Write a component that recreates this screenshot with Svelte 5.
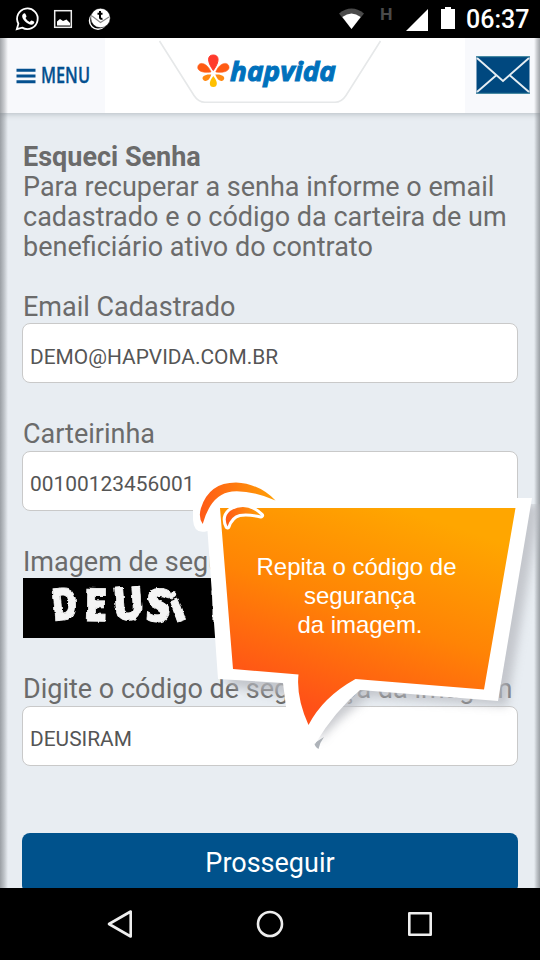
<script>
  const fields = [
    { id: 'email', label: 'Email Cadastrado', value: 'DEMO@HAPVIDA.COM.BR' },
    { id: 'card', label: 'Carteirinha', value: '00100123456001' }
  ];
  const glyphs = [
    { c: 'D', x: 30, y: 43, r: -5, s: 45, w: 26 },
    { c: 'E', x: 61, y: 43, r: 1, s: 46, w: 23 },
    { c: 'U', x: 91, y: 43, r: -4, s: 46, w: 31 },
    { c: 'S', x: 122, y: 43, r: 3, s: 46, w: 25 },
    { c: 'i', x: 152, y: 45, r: -20, s: 39, w: 14 },
    { c: 'R', x: 187, y: 43, r: 0, s: 42, w: 26 }
  ];
</script>

<div class="phone">
  <div class="status">
    <svg class="notif" width="120" height="38" viewBox="0 0 120 38">
      <path d="M16.800 29.200l1.600-5.500a10.300 10.300 0 1 1 3.800 3.900z" fill="none" stroke="#fff" stroke-width="1.800" />
      <path d="M23.500 13.800c.8-.7 1.600-.5 2 .3l.9 2c.3.6-.3 1.300-.9 1.900 1 2 2.500 3.200 4.300 3.900.7-.7 1.300-1.600 2-1.300l2.100 1c.9.5.2 2-.8 2.700-3.700 2.100-11.700-4.900-10.900-8.900.2-.8.7-1.200 1.300-1.600z" fill="#fff" />
      <rect x="54.700" y="10.700" width="16.600" height="16.600" fill="none" stroke="#eee" stroke-width="1.500" />
      <path d="M57 25.500v-4l3-2.500 3 2 3.500-1.500 3.500 3.500v2.500z" fill="#fff" />
      <circle cx="98" cy="20.800" r="8.500" fill="none" stroke="#fff" stroke-width="1.500" />
      <circle cx="100.500" cy="18" r="9.800" fill="#fff" stroke="#000" stroke-width=".6" />
      <path d="M92 16l8.500 6.500 8.500-5.500" fill="none" stroke="#888" stroke-width="1.100" />
      <path d="M100 11v6.500q0 1.700 2.500 1.200M97.500 13.700h5" fill="none" stroke="#000" stroke-width="2" />
    </svg>
    <div class="right">
      <svg width="124" height="38" viewBox="336 0 124 38">
        <path d="M339 13.500Q351.500 3.500 364 13.500L351.500 29z" fill="#4a4a4a" />
        <path d="M342.300 17Q351.500 10 360.700 17L351.500 29z" fill="#fff" />
        <text x="380" y="19.800" class="net" textLength="12.500" lengthAdjust="spacingAndGlyphs">H</text>
        <path d="M428 9v22h-22z" fill="#fff" />
        <path d="M441 9h4V7h6v2h4v20h-14z" fill="#fff" />
      </svg>
      <span class="clock">06:37</span>
    </div>
  </div>

  <div class="page">
    <header>
      <button class="menu" aria-label="MENU">
        <svg width="20" height="18" viewBox="0 0 20 18"><path d="M.5 3.200h19M.5 9h19M.5 14.800h19" stroke="#04508f" stroke-width="2.900" /></svg>
        <svg width="56" height="40" viewBox="0 0 56 40"><text x="0" y="27" class="menu-text" textLength="49" lengthAdjust="spacingAndGlyphs">MENU</text></svg>
      </button>
      <svg class="brand" width="360" height="75" viewBox="105 38 360 75">
        <path d="M159.500 41L194 95.500Q198.500 102.300 205 102.300H335Q341.500 102.300 346 95.500L380.500 41" fill="none" stroke="#e6e8e9" stroke-width="1.600" />
        <path d="M213.300 70.500C206.500 61 207.500 55 213.300 55S220.200 61 213.300 70.500z" fill="#ff3a2c" stroke="#ff3a2c" />
        <path d="M211 72C201.500 73.500 196 70 198.200 65.500S208 64 211 72z" fill="#ff5b14" stroke="#ff5b14" stroke-width=".6" />
        <path d="M215.800 72C225 73.500 230.800 70 228.600 65.500S218.500 64 215.800 72z" fill="#ff5b14" stroke="#ff5b14" stroke-width=".6" />
        <path d="M211.300 74.500C209.500 81 205 82.500 203 79.500S205.500 73.800 211.300 74.500z" fill="#ff8a12" />
        <path d="M215.300 74.500C217.500 81 222 82.500 223.800 79.500S221.500 73.800 215.300 74.500z" fill="#ff8a12" />
        <path d="M213.300 76C208.500 82 208.800 87 213.300 87S218.200 82 213.300 76z" fill="#ffc000" />
        <text x="230" y="80.500" class="logo" textLength="106" lengthAdjust="spacingAndGlyphs">hapvida</text>
      </svg>
      <button class="mail" aria-label="Email">
        <svg width="54" height="38" viewBox="0 0 54 38">
          <rect x=".5" y=".5" width="53" height="37" fill="#00487f" />
          <path d="M1 2L27 25 53 2M1 36L20 19.500M53 36L34 19.500" fill="none" stroke="#e5edf2" stroke-width="1.900" />
          <path d="M0 .7h54M0 37.300h54" stroke="#3b849c" />
        </svg>
      </button>
    </header>

    <main>
      <p class="intro"><b>Esqueci Senha</b><br />Para recuperar a senha informe o email<br />cadastrado e o código da carteira de um<br />beneficiário ativo do contrato</p>
      {#each fields as f}
        <div class="field">
          <label for={f.id}>{f.label}</label>
          <input class={f.id} id={f.id} value={f.value} />
        </div>
      {/each}
      <div class="field">
        <span class="label">Imagem de segurança</span>
        <svg class="captcha" width="246" height="60" viewBox="0 0 246 60">
          <defs>
            <filter id="worn" x="-5%" y="-10%" width="110%" height="120%">
              <feTurbulence type="fractalNoise" baseFrequency=".12" numOctaves="3" seed="8" result="n" />
              <feDisplacementMap in="SourceGraphic" in2="n" scale="4" xChannelSelector="R" yChannelSelector="G" />
              <feGaussianBlur stdDeviation=".35" />
            </filter>
          </defs>
          <rect width="246" height="60" fill="#000" />
          <g filter="url(#worn)">
            {#each glyphs as g}
              <text class="glyph" x={g.x} y={g.y} font-size={g.s} textLength={g.w} lengthAdjust="spacingAndGlyphs" transform={`rotate(${g.r} ${g.x} ${g.y})`}>{g.c}</text>
            {/each}
          </g>
        </svg>
      </div>
      <div class="field last">
        <label for="code">Digite o código de segurança da imagem</label>
        <input class="code" id="code" value="DEUSIRAM" />
      </div>
      <button class="submit">Prosseguir</button>
    </main>
    <div class="edge left"></div>
    <div class="edge rightedge"></div>
  </div>

  <nav>
    <svg width="540" height="72" viewBox="0 888 540 72" fill="none" stroke="#eee" stroke-width="2.600" stroke-linejoin="round">
      <path d="M130.700 911.500v25L109 924z" />
      <circle cx="270" cy="924" r="12" />
      <rect x="409.300" y="913.300" width="21.400" height="21.400" />
    </svg>
  </nav>

  <svg class="tip" width="360" height="310" viewBox="180 470 360 310">
    <defs>
      <linearGradient id="fire" gradientUnits="userSpaceOnUse" x1="400" y1="508" x2="330" y2="715">
        <stop offset="0" stop-color="#ffa600" />
        <stop offset=".5" stop-color="#ff8405" />
        <stop offset="1" stop-color="#ff5018" />
      </linearGradient>
      <linearGradient id="arc" x1="0" x2="1" y1="0" y2="0">
        <stop offset="0" stop-color="#ff5a17" />
        <stop offset="1" stop-color="#ffa005" />
      </linearGradient>
      <filter id="soft" x="-10%" y="-10%" width="125%" height="125%"><feGaussianBlur stdDeviation="5" /></filter>
      <clipPath id="shade"><path d="M180 504H540V780H316L316 748 218 679H180z" /></clipPath>
    </defs>
    <g clip-path="url(#shade)">
      <path d="M230 504H541L507 706L369 697Q340 717 319 741L310 700L228 686z" fill="#b8bac0" opacity=".75" filter="url(#soft)" />
    </g>
    <path d="M314.500 743Q314.500 746.500 318.500 749Q319.500 743 324 737z" fill="#9aa0a8" opacity=".8" />
    <path d="M193 512V498L230 480L280 498H532L498 701L360 690Q335 711 315 744L300 736L286 707L283 683L218 679L207.500 531Q194 535 193 520z" fill="#fff" />
    <path d="M220 508H515.500L484 689.500L355.500 679Q323 697 308.500 725Q296 697 298.500 674.500L233 669z" fill="url(#fire)" />
    <path d="M202.700 524Q198 517 201 508Q209 482.500 236 482.500Q259 483.500 275.500 500.500Q251 490 232 491.500Q211 494 202.700 524z" fill="url(#arc)" />
    <path d="M227.500 526.500Q223 517 230 511Q246 501 261 515.500Q248 512.500 239.500 514Q231 516 227.500 526.500z" fill="url(#arc)" stroke="#fff" stroke-width="6" stroke-linejoin="round" paint-order="stroke" />
    <g class="tip-text">
      <text x="256.500" y="575" textLength="200">Repita o código de</text>
      <text x="304" y="604" textLength="111.500">segurança</text>
      <text x="297.500" y="633" textLength="125">da imagem.</text>
    </g>
  </svg>
</div>

<style>
  :global(body) { margin: 0; background: #000; }
  .phone { position: relative; width: 540px; height: 960px; overflow: hidden; display: flex; flex-direction: column; font-family: Roboto, sans-serif; background: #000; }
  .status { height: 38px; flex: none; display: flex; justify-content: space-between; background: #000; }
  .right { display: flex; width: 204px; }
  .net { font: 700 17px Roboto, sans-serif; fill: #4a4a4a; }
  .clock { padding-left: 6px; font-size: 25px; font-weight: 500; line-height: 40px; color: #fff; white-space: nowrap; }
  .page { position: relative; height: 850px; flex: none; overflow: hidden; background: #e8edf2; }
  header { display: flex; height: 75px; background: #fff; box-shadow: 0 1px 6px #b5bcc2; }
  button { border: 0; padding: 0; font-family: inherit; }
  .menu { box-sizing: border-box; display: flex; align-items: center; gap: 5px; width: 105px; padding-left: 16px; background: #f8f9fc; }
  .menu svg { flex: none; }
  .menu-text { font: 600 21px "Open Sans", sans-serif; fill: #04508f; stroke: #04508f; stroke-width: .3; }
  .mail { box-sizing: border-box; width: 75px; padding: 0 0 1px 1px; display: flex; align-items: center; justify-content: center; background: #f8f9fc; }
  .logo { font: italic 700 27.500px "Open Sans", sans-serif; fill: #0071bc; stroke: #0071bc; stroke-width: 1; }
  main { display: flex; flex-direction: column; padding: 28px 22px 0 22px; color: #6b6b6b; font-size: 27px; line-height: 30px; }
  .intro { padding-top: 1px; margin: 0 0 29px 1px; white-space: nowrap; }
  .field { height: 127.500px; flex: none; display: flex; flex-direction: column; align-items: stretch; white-space: nowrap; }
  label, .label { box-sizing: border-box; height: 32px; padding: .8px 0 0 1px; }
  input { box-sizing: border-box; width: 496px; height: 60px; padding: 7px 7px 0; border: 1.500px solid #c9c9c9; border-radius: 8px; background: #fff; color: #555; font: 20.900px Roboto, sans-serif; outline: none; }
  .captcha { display: block; margin: -.5px 0 0 .5px; }
  .glyph { font-family: "Open Sans", sans-serif; font-weight: 800; fill: #f4f4f4; stroke: #f4f4f4; stroke-width: .8; }
  .submit { height: 60px; flex: none; margin-top: 32.500px; border-radius: 8px; background: #00528c; color: #fff; font-size: 27px; font-weight: 400; line-height: 58px; }
  .last { height: 127px; }
  .edge { position: absolute; top: 0; bottom: 0; pointer-events: none; }
  .left { left: 0; width: 8px; background: linear-gradient(90deg, rgba(90,95,100,.55), rgba(90,95,100,.3) 50%, transparent); }
  .rightedge { right: 0; width: 6px; background: linear-gradient(270deg, rgba(90,95,100,.55), rgba(90,95,100,.3) 50%, transparent); }
  nav { height: 72px; flex: none; background: #000; }
  nav svg, header svg { display: block; }
  .tip { position: absolute; left: 180px; top: 470px; }
  .tip-text { font: 24px "Liberation Sans", Arial, sans-serif; fill: #fff; }
</style>
